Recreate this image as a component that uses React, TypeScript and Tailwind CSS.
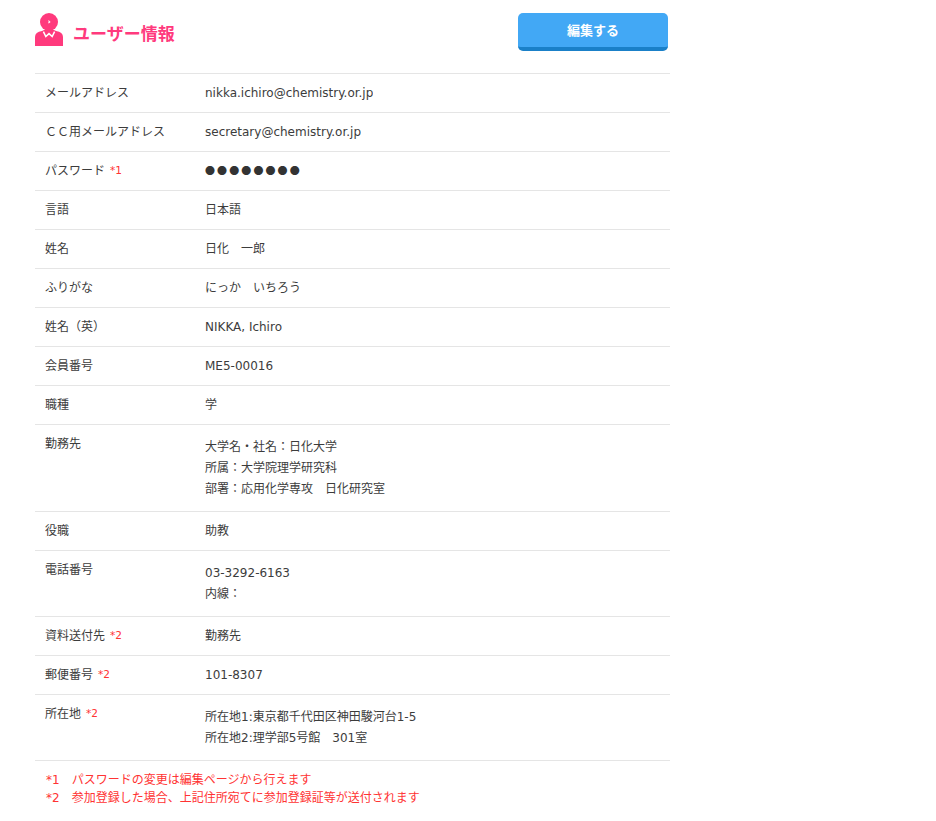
const Req = ({ n }: { n: number }) => (
  <span className="ml-[5px] align-[1px] text-[10.5px] leading-none text-[#ff3333]">*{n}</span>
);

const rows = [
  { label: 'メールアドレス', lines: ['nikka.ichiro@chemistry.or.jp'] },
  { label: 'ＣＣ用メールアドレス', lines: ['secretary@chemistry.or.jp'] },
  { label: 'パスワード', note: 1, lines: ['●●●●●●●●'], dots: true },
  { label: '言語', lines: ['日本語'] },
  { label: '姓名', lines: ['日化　一郎'] },
  { label: 'ふりがな', lines: ['にっか　いちろう'] },
  { label: '姓名（英）', lines: ['NIKKA, Ichiro'] },
  { label: '会員番号', lines: ['ME5-00016'] },
  { label: '職種', lines: ['学'] },
  { label: '勤務先', lines: ['大学名・社名：日化大学', '所属：大学院理学研究科', '部署：応用化学専攻　日化研究室'] },
  { label: '役職', lines: ['助教'] },
  { label: '電話番号', lines: ['03-3292-6163', '内線：'] },
  { label: '資料送付先', note: 2, lines: ['勤務先'] },
  { label: '郵便番号', note: 2, lines: ['101-8307'] },
  { label: '所在地', note: 2, lines: ['所在地1:東京都千代田区神田駿河台1-5', '所在地2:理学部5号館　301室'] },
];

const UserIcon = () => (
  <svg width="28" height="33" viewBox="0 0 28 33" className="block self-start">
    <path d="M0 33 V24 Q0 19 7 18 L9 17 H19 L21 18 Q28 19 28 24 V33 Z" fill="#ff3a7d" />
    <circle cx="14" cy="9" r="9" fill="#ff3a7d" />
    <path d="M13.4 7.6 L14.8 8.9 L13.4 10.2" fill="none" stroke="#fff" strokeWidth="1.1" />
    <path d="M8.4 18.6 L10.8 23.6 L14 20.6 L17.2 23.6 L19.6 18.6" fill="none" stroke="#fff" strokeWidth="1.5" />
  </svg>
);

export default function App() {
  return (
    <div className="w-[936px] min-h-[821px] bg-white font-['DejaVu_Sans','Noto_Sans_CJK_JP',sans-serif] text-[12px] text-[#3c3c3c]">
      <div className="ml-[35px] w-[635px] pt-[13px]">
        <div className="flex h-[60px] items-start justify-between">
          <div className="flex items-center">
            <UserIcon />
            <h1 className="ml-[10px] font-['Noto_Sans_CJK_JP',sans-serif] text-[17px] leading-[40px] font-bold text-[#ff3a7d]">ユーザー情報</h1>
          </div>
          <button className="mr-[2px] h-[38px] w-[150px] rounded-[5px] border-b-[4px] border-[#1a80c8] bg-[#42a8f5] font-['Noto_Sans_CJK_JP',sans-serif] text-[13px] font-bold text-white">
            編集する
          </button>
        </div>
        <div className="border-t border-[#e5e5e5]">
          {rows.map((row) => {
            const multi = row.lines.length > 1;
            return (
              <div key={row.label} className="flex border-b border-[#e5e5e5] px-[10px]">
                <div className="h-[38px] w-[160px] shrink-0 overflow-hidden pt-[1px] leading-[37px]">
                  {row.label}
                  {row.note ? <Req n={row.note} /> : null}
                </div>
                <div className={multi ? 'pt-[12px] pb-[11px] leading-[21px]' : 'h-[38px] overflow-hidden pt-[1px] leading-[37px]'}>
                  {row.lines.map((line) => (
                    <div key={line} className={row.dots ? "-mt-[1px] font-['Noto_Sans_CJK_JP',sans-serif] text-[10px] tracking-[2.1px] text-[#333]" : ''}>
                      {line}
                    </div>
                  ))}
                </div>
              </div>
            );
          })}
        </div>
        <div className="pt-[10px] pl-[11px] leading-[18px] text-[#ff3333]">
          <p>*1　パスワードの変更は編集ページから行えます</p>
          <p>*2　参加登録した場合、上記住所宛てに参加登録証等が送付されます</p>
        </div>
      </div>
    </div>
  );
}
